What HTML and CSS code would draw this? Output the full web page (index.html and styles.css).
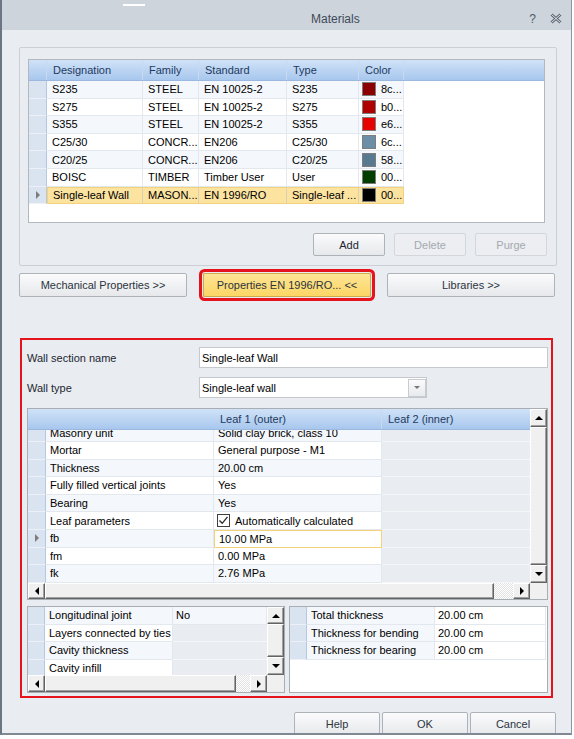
FILE: index.html
```html
<!DOCTYPE html>
<html lang="en">
<head>
    <meta charset="UTF-8">
    <title>Materials</title>
    <link rel="stylesheet" href="styles.css">
</head>
<body>
<div class="window">
    <div class="titlebar">
        <span class="glint"></span>
        <span class="title">Materials</span>
        <span class="tb-help">?</span>
        <svg class="tb-close" width="12" height="11" viewBox="0 0 12 11">
            <path d="M1.5 1.5L10.5 9.5M10.5 1.5L1.5 9.5" stroke="#5f6872" stroke-width="3" fill="none"/>
            <path d="M1.5 1.5L10.5 9.5M10.5 1.5L1.5 9.5" stroke="#dde2e8" stroke-width="1" fill="none"/>
        </svg>
    </div>

    <div class="groupbox">
        <div class="mgrid">
            <div class="mhead">
                <div class="hc w-ind"></div>
                <div class="hc w-des">Designation</div>
                <div class="hc w-fam">Family</div>
                <div class="hc w-std">Standard</div>
                <div class="hc w-typ">Type</div>
                <div class="hc w-col">Color</div>
                <div class="hc fill"></div>
            </div>
            <div class="mrow">
                <div class="ind w-ind"></div>
                <div class="cell w-des">S235</div><div class="cell w-fam">STEEL</div>
                <div class="cell w-std">EN 10025-2</div><div class="cell w-typ">S235</div>
                <div class="cell w-col"><span class="sw" style="background:#8c0000"></span>8c...</div>
            </div>
            <div class="mrow">
                <div class="ind w-ind"></div>
                <div class="cell w-des">S275</div><div class="cell w-fam">STEEL</div>
                <div class="cell w-std">EN 10025-2</div><div class="cell w-typ">S275</div>
                <div class="cell w-col"><span class="sw" style="background:#b00000"></span>b0...</div>
            </div>
            <div class="mrow">
                <div class="ind w-ind"></div>
                <div class="cell w-des">S355</div><div class="cell w-fam">STEEL</div>
                <div class="cell w-std">EN 10025-2</div><div class="cell w-typ">S355</div>
                <div class="cell w-col"><span class="sw" style="background:#e60000"></span>e6...</div>
            </div>
            <div class="mrow">
                <div class="ind w-ind"></div>
                <div class="cell w-des">C25/30</div><div class="cell w-fam">CONCR...</div>
                <div class="cell w-std">EN206</div><div class="cell w-typ">C25/30</div>
                <div class="cell w-col"><span class="sw" style="background:#6c8ea6"></span>6c...</div>
            </div>
            <div class="mrow">
                <div class="ind w-ind"></div>
                <div class="cell w-des">C20/25</div><div class="cell w-fam">CONCR...</div>
                <div class="cell w-std">EN206</div><div class="cell w-typ">C20/25</div>
                <div class="cell w-col"><span class="sw" style="background:#587a90"></span>58...</div>
            </div>
            <div class="mrow">
                <div class="ind w-ind"></div>
                <div class="cell w-des">BOISC</div><div class="cell w-fam">TIMBER</div>
                <div class="cell w-std">Timber User</div><div class="cell w-typ">User</div>
                <div class="cell w-col"><span class="sw" style="background:#003f00"></span>00...</div>
            </div>
            <div class="mrow sel">
                <div class="ind w-ind cur"></div>
                <div class="cell w-des">Single-leaf Wall</div><div class="cell w-fam">MASON...</div>
                <div class="cell w-std">EN 1996/RO</div><div class="cell w-typ">Single-leaf ...</div>
                <div class="cell w-col"><span class="sw" style="background:#000"></span>00...</div>
            </div>
        </div>
        <div class="btnrow">
            <button class="btn small">Add</button>
            <button class="btn small" disabled>Delete</button>
            <button class="btn small" disabled>Purge</button>
        </div>
    </div>

    <div class="tabs">
        <button class="btn tab">Mechanical Properties &gt;&gt;</button>
        <button class="btn tab active">Properties EN 1996/RO... &lt;&lt;</button>
        <button class="btn tab">Libraries &gt;&gt;</button>
    </div>

    <div class="props">
        <div class="field">
            <span class="label">Wall section name</span>
            <div class="input">Single-leaf Wall</div>
        </div>
        <div class="field gap">
            <span class="label">Wall type</span>
            <div class="select"><span class="sel-text">Single-leaf wall</span><span class="dd"></span></div>
        </div>

        <div class="pgrid">
            <div class="pg-main">
                <div class="phead">
                    <div class="hc pw-head"></div>
                    <div class="hc pw-v1">Leaf 1 (outer)</div>
                    <div class="hc pw-v2">Leaf 2 (inner)</div>
                </div>
                <div class="pg-body">
                    <div class="pg-rows">
                        <div class="prow"><div class="ind pw-ind"></div><div class="cell pw-nm">Masonry unit</div><div class="cell pw-v1">Solid clay brick, class 10</div><div class="cell pw-v2 off"></div></div>
                        <div class="prow"><div class="ind pw-ind"></div><div class="cell pw-nm">Mortar</div><div class="cell pw-v1">General purpose - M1</div><div class="cell pw-v2 off"></div></div>
                        <div class="prow"><div class="ind pw-ind"></div><div class="cell pw-nm">Thickness</div><div class="cell pw-v1">20.00 cm</div><div class="cell pw-v2 off"></div></div>
                        <div class="prow"><div class="ind pw-ind"></div><div class="cell pw-nm">Fully filled vertical joints</div><div class="cell pw-v1">Yes</div><div class="cell pw-v2 off"></div></div>
                        <div class="prow"><div class="ind pw-ind"></div><div class="cell pw-nm">Bearing</div><div class="cell pw-v1">Yes</div><div class="cell pw-v2 off"></div></div>
                        <div class="prow"><div class="ind pw-ind"></div><div class="cell pw-nm">Leaf parameters</div>
                            <div class="cell pw-v1"><span class="chk"><svg width="11" height="11" viewBox="0 0 11 11"><path d="M1.5 5.5L4.2 8.3L9.5 1.8" stroke="#262626" stroke-width="1.3" fill="none"/></svg></span>Automatically calculated</div>
                            <div class="cell pw-v2 off"></div></div>
                        <div class="prow"><div class="ind pw-ind cur"></div><div class="cell pw-nm">fb</div><div class="cell pw-v1 focus">10.00 MPa</div><div class="cell pw-v2 off"></div></div>
                        <div class="prow"><div class="ind pw-ind"></div><div class="cell pw-nm">fm</div><div class="cell pw-v1">0.00 MPa</div><div class="cell pw-v2 off"></div></div>
                        <div class="prow"><div class="ind pw-ind"></div><div class="cell pw-nm">fk</div><div class="cell pw-v1">2.76 MPa</div><div class="cell pw-v2 off"></div></div>
                    </div>
                </div>
                <div class="hscroll">
                    <div class="sb-btn left"></div>
                    <div class="sb-btn" style="width:449px"></div>
                    <div class="sb-track"></div>
                    <div class="sb-btn right"></div>
                </div>
            </div>
            <div class="vscroll">
                <div class="sb-btn up" style="height:18px"></div>
                <div class="sb-btn" style="height:138px"></div>
                <div class="sb-btn down" style="height:18px"></div>
                <div class="sb-corner"></div>
            </div>
        </div>

        <div class="subgrids">
            <div class="sgrid">
                <div class="sg-main">
                    <div class="sg-body">
                        <div class="prow"><div class="ind sw-ind"></div><div class="cell sw-nm">Longitudinal joint</div><div class="cell sw-v">No</div></div>
                        <div class="prow"><div class="ind sw-ind"></div><div class="cell sw-nm">Layers connected by ties</div><div class="cell sw-v off"></div></div>
                        <div class="prow"><div class="ind sw-ind"></div><div class="cell sw-nm">Cavity thickness</div><div class="cell sw-v off"></div></div>
                        <div class="prow"><div class="ind sw-ind"></div><div class="cell sw-nm">Cavity infill</div><div class="cell sw-v off"></div></div>
                    </div>
                    <div class="hscroll tall">
                        <div class="sb-btn left"></div>
                        <div class="sb-btn" style="width:191px"></div>
                        <div class="sb-track"></div>
                        <div class="sb-btn right"></div>
                    </div>
                </div>
                <div class="vscroll">
                    <div class="sb-btn up" style="height:17px"></div>
                    <div class="sb-btn" style="height:33px"></div>
                    <div class="sb-btn down" style="height:18px"></div>
                    <div class="sb-corner"></div>
                </div>
            </div>
            <div class="sgrid right">
                <div class="prow"><div class="ind sw-ind"></div><div class="cell sw-nm">Total thickness</div><div class="cell sw-v2">20.00 cm</div></div>
                <div class="prow"><div class="ind sw-ind"></div><div class="cell sw-nm">Thickness for bending</div><div class="cell sw-v2">20.00 cm</div></div>
                <div class="prow"><div class="ind sw-ind"></div><div class="cell sw-nm">Thickness for bearing</div><div class="cell sw-v2">20.00 cm</div></div>
            </div>
        </div>
    </div>

    <div class="footer">
        <button class="btn foot">Help</button>
        <button class="btn foot">OK</button>
        <button class="btn foot">Cancel</button>
    </div>
</div>
</body>
</html>
```

FILE: styles.css
```css
* {
    box-sizing: border-box;
}
body {
    margin: 0;
    background: #fff;
    font-family: "Liberation Sans", Arial, sans-serif;
    font-size: 11px;
    color: #000;
}
.window {
    width: 572px;
    height: 735px;
    border-left: 2px solid #6c7682;
    border-right: 1px solid #8c959f;
    border-bottom: 2px solid #7f8893;
    background: #e9ecf0;
    overflow: hidden;
}

/* title bar */
.titlebar {
    position: relative;
    height: 30px;
    background: #cdd4dc;
    display: flex;
    align-items: center;
    padding: 7px 9px 0 0;
}
.titlebar .glint {
    position: absolute;
    left: 121px;
    top: 4px;
    width: 22px;
    height: 2px;
    background: #fff;
}
.title {
    margin-left: 309px;
    font-size: 12px;
    color: #3f4b58;
}
.tb-help {
    margin-left: auto;
    margin-right: 13px;
    width: 9px;
    font-size: 12px;
    color: #4f5964;
    text-align: center;
}

/* buttons */
.btn {
    font-family: inherit;
    font-size: 11px;
    color: #1d2530;
    background: linear-gradient(#fbfbfc, #e6e8eb);
    border: 1px solid #aeb3ba;
    border-radius: 2px;
    padding: 0;
}
.btn:disabled {
    color: #a4a9b0;
    background: #eceef1;
    border-color: #d3d6db;
}
.btn.small {
    width: 72px;
    height: 23px;
}
.btn.tab {
    width: 168px;
    height: 24px;
    color: #2b3440;
}
.btn.active {
    background: linear-gradient(#fee595, #fcd665);
    border-color: #cfaa4b;
    box-shadow: 0 0 0 1px #e9ecf0, 0 0 0 4px #e5141c;
}
.btn.foot {
    width: 86px;
    height: 24px;
    color: #2b3440;
}

/* materials group */
.groupbox {
    margin: 17px 0 0 17px;
    width: 538px;
    border: 1px solid #cbd0d6;
    border-radius: 2px;
    padding: 11px 9px 9px 8px;
}
.btnrow {
    display: flex;
    justify-content: flex-end;
    gap: 9px;
    margin-top: 10px;
}
.mgrid {
    width: 517px;
    height: 164px;
    border: 1px solid #b3b8bf;
    background: #fff;
    overflow: hidden;
}
.mhead, .phead {
    display: flex;
    height: 21px;
    background: linear-gradient(#d0e2f7, #a8c7ee);
    border-bottom: 1px solid #9bb9df;
}
.hc {
    display: flex;
    align-items: center;
    padding-left: 6px;
    color: #1e3a5f;
    border-right: 1px solid #c6d9f1;
    white-space: nowrap;
}
.hc.fill {
    flex: 1;
    border-right: none;
}
.w-ind { width: 18px; flex: none; }
.w-des { width: 96px; flex: none; }
.w-fam { width: 56px; flex: none; }
.w-std { width: 88px; flex: none; }
.w-typ { width: 72px; flex: none; }
.w-col { width: 45px; flex: none; }

.mrow, .prow {
    display: flex;
    height: 17.6px;
}
.ind {
    background: #dae3f0;
    border-bottom: 1px solid #edf1f7;
    border-right: 1px solid #b5c8e2;
    display: flex;
    align-items: center;
    justify-content: center;
}
.ind.cur::after {
    content: "";
    border-left: 4px solid #7c7c7c;
    border-top: 4px solid transparent;
    border-bottom: 4px solid transparent;
}
.cell {
    display: flex;
    align-items: center;
    padding-left: 5px;
    border-right: 1px solid #e3e8ee;
    border-bottom: 1px solid #e3e8ee;
    white-space: nowrap;
    overflow: hidden;
    background: #fff;
}
.mrow:nth-child(even) .cell,
.prow:nth-child(odd) .cell {
    background: #f4f7fb;
}
.mrow .w-col {
    padding-left: 3px;
}
.sw {
    width: 14px;
    height: 14px;
    border: 1px solid #7d7d7d;
    margin-right: 5px;
    flex: none;
}
.mrow.sel .cell {
    background: #fde3a0;
    border-right-color: #d9cfb3;
    border-top: 1px solid #f2d27b;
    border-bottom: 1px solid #f2d27b;
}
.mrow.sel .w-des {
    border-left: 1px solid #f2d27b;
}
.mrow.sel .w-col {
    border-right-color: #f2d27b;
}

/* tabs */
.tabs {
    display: flex;
    gap: 16px;
    margin: 7px 0 0 17px;
}

/* properties panel */
.props {
    margin: 41px 0 0 18px;
    width: 533px;
    border: 2px solid #e5141c;
    padding: 7px 3px 3px 5px;
}
.field {
    display: flex;
    align-items: center;
    height: 21px;
}
.field.gap {
    margin-top: 9px;
}
.label {
    width: 172px;
    flex: none;
    color: #1c2631;
}
.input {
    width: 350px;
    height: 21px;
    border: 1px solid #c5c9ce;
    background: #fff;
    padding-left: 2px;
    display: flex;
    align-items: center;
}
.select {
    width: 228px;
    height: 21px;
    border: 1px solid #c5c9ce;
    background: #fff;
    display: flex;
    align-items: center;
    padding-left: 2px;
}
.sel-text {
    flex: 1;
}
.dd {
    width: 18px;
    height: 18px;
    border: 1px solid #c8ccd1;
    background: linear-gradient(#fbfbfc, #e8eaed);
    display: flex;
    align-items: center;
    justify-content: center;
}
.dd::after {
    content: "";
    border-top: 3px solid #777;
    border-left: 3px solid transparent;
    border-right: 3px solid transparent;
}

.pgrid {
    display: flex;
    height: 192px;
    margin-top: 10px;
    border: 1px solid #a9aeb5;
    background: #f0f0f0;
}
.pg-main {
    width: 502px;
    display: flex;
    flex-direction: column;
}
.pw-head { width: 186px; flex: none; border-right: none; }
.pw-ind { width: 18px; flex: none; }
.pw-nm { width: 168px; flex: none; }
.pw-v1 { width: 168px; flex: none; }
.pw-v2 { width: 148px; flex: none; }
.phead .pw-v2 { border-right: none; }
.pg-body {
    height: 153px;
    overflow: hidden;
    background: #e9ecf0;
}
.pg-rows {
    margin-top: -5.6px;
}
.prow .pw-nm, .prow .pw-v1 {
    padding-left: 4px;
}
.prow .cell.off,
.prow:nth-child(odd) .cell.off {
    background: #e9ecf0;
    border-right: none;
    border-bottom-color: #f5f6f8;
}
.prow .cell.focus,
.prow:nth-child(odd) .cell.focus {
    background: #fff;
    border: 1px solid #f3d27a;
}
.chk {
    width: 13px;
    height: 13px;
    margin: 0 5px 0 -1px;
    border: 1px solid #3f3f3f;
    background: #fff;
    display: flex;
    align-items: center;
    justify-content: center;
}

/* scrollbars */
.vscroll {
    width: 17px;
    flex: none;
    display: flex;
    flex-direction: column;
}
.hscroll {
    display: flex;
    height: 16px;
    flex: none;
}
.hscroll.tall {
    height: 17px;
}
.sb-btn {
    flex: none;
    background: #f0f0f0;
    border: 1px solid;
    border-color: #fff #646464 #646464 #fff;
    box-shadow: inset -1px -1px 0 #a0a0a0;
    display: flex;
    align-items: center;
    justify-content: center;
}
.sb-btn.left, .sb-btn.right {
    width: 17px;
}
.sb-track {
    flex: 1;
    background: repeating-conic-gradient(#fff 0 25%, #e2e2e2 0 50%) 0 0 / 2px 2px;
}
.sb-corner {
    flex: 1;
    background: #f0f0f0;
}
.sb-btn.up::after {
    content: "";
    border-bottom: 4px solid #000;
    border-left: 4px solid transparent;
    border-right: 4px solid transparent;
}
.sb-btn.down::after {
    content: "";
    border-top: 4px solid #000;
    border-left: 4px solid transparent;
    border-right: 4px solid transparent;
}
.sb-btn.left::after {
    content: "";
    border-right: 4px solid #000;
    border-top: 4px solid transparent;
    border-bottom: 4px solid transparent;
}
.sb-btn.right::after {
    content: "";
    border-left: 4px solid #000;
    border-top: 4px solid transparent;
    border-bottom: 4px solid transparent;
}

/* lower grids */
.subgrids {
    display: flex;
    gap: 4px;
    margin-top: 6px;
}
.sgrid {
    width: 258px;
    height: 87px;
    border: 1px solid #a9aeb5;
    display: flex;
    background: #fff;
}
.sgrid.right {
    width: 259px;
    flex-direction: column;
}
.sg-main {
    width: 239px;
    display: flex;
    flex-direction: column;
}
.sg-body {
    height: 68px;
    overflow: hidden;
}
.sw-ind { width: 17px; flex: none; }
.sw-nm { width: 128px; flex: none; padding-left: 4px; }
.sw-v { width: 94px; flex: none; padding-left: 3px; }
.sw-v2 { width: 111px; flex: none; padding-left: 3px; }
.sgrid.right .prow .cell {
    background: #fff;
}
.sgrid.right .prow .sw-nm {
    background: #f4f7fb;
}

/* footer */
.footer {
    display: flex;
    justify-content: flex-end;
    gap: 2px;
    margin-top: 14px;
    padding-right: 15px;
}
```
